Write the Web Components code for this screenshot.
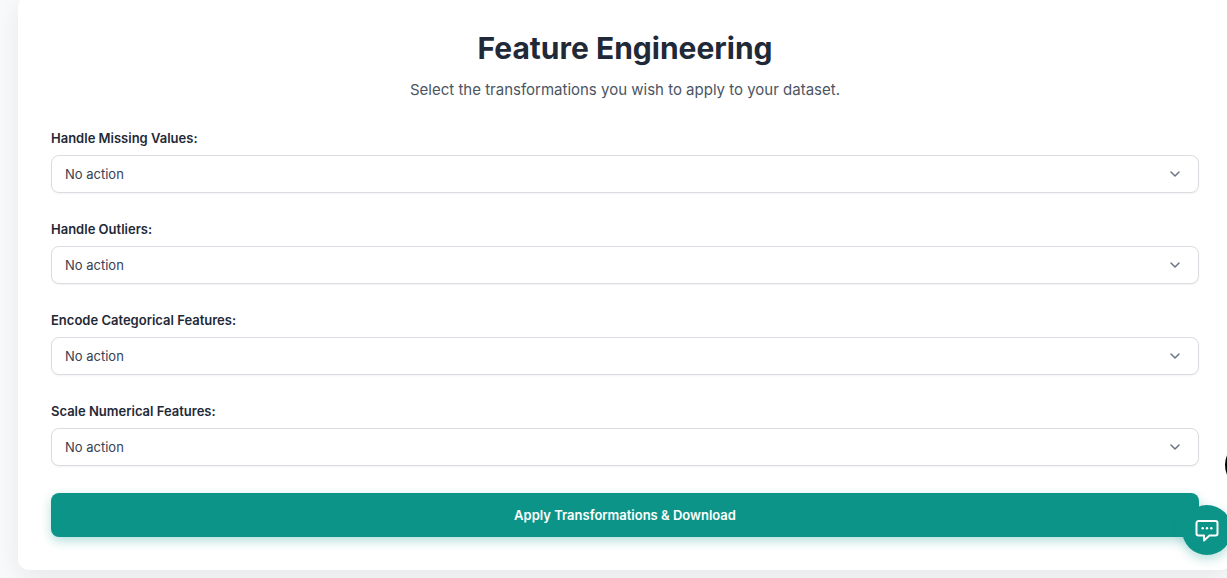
<!DOCTYPE html>
<html lang="en">
<head>
<meta charset="utf-8">
<meta name="viewport" content="width=device-width, initial-scale=1">
<title>Feature Engineering</title>
<style>
html { background: #f9fafb; }
body { margin: 0; min-height: 100vh; font-family: Inter, "Liberation Sans", sans-serif; color: #1f2937; overflow: hidden; }
</style>
</head>
<body>
<feature-page></feature-page>

<script>
class FeaturePage extends HTMLElement {
  constructor() {
    super();
    this.attachShadow({ mode: "open" }).innerHTML = `
      <style>
        :host { display: block; padding-left: 18px; margin-right: -5px; }
      </style>
      <form-card>
        <page-heading>
          <span slot="title">Feature Engineering</span>
          <span slot="hint">Select the transformations you wish to apply to your dataset.</span>
        </page-heading>
        <select-field label="Handle Missing Values:"></select-field>
        <select-field label="Handle Outliers:"></select-field>
        <select-field label="Encode Categorical Features:"></select-field>
        <select-field label="Scale Numerical Features:"></select-field>
        <submit-button>Apply Transformations &amp; Download</submit-button>
      </form-card>
      <side-handle></side-handle>
      <chat-launcher></chat-launcher>`;
  }
}

class FormCard extends HTMLElement {
  constructor() {
    super();
    this.attachShadow({ mode: "open" }).innerHTML = `
      <style>
        :host { display: block; }
        form {
          display: flex; flex-direction: column; gap: 27px;
          margin: 0; margin-top: -4px; padding: 33px; background: #fff; border-radius: 11px;
          box-shadow: 0 8px 28px rgba(0, 0, 0, .08);
        }
      </style>
      <form><slot></slot></form>`;
  }
}

class PageHeading extends HTMLElement {
  constructor() {
    super();
    this.attachShadow({ mode: "open" }).innerHTML = `
      <style>
        :host { display: block; text-align: center; }
        h1 { margin: 0 0 11px; font-size: 30px; line-height: 38px; font-weight: 700; color: #1f2937; }
        p { margin: 0; font-size: 15px; line-height: 24px; color: #4b5563; }
      </style>
      <h1><slot name="title"></slot></h1>
      <p><slot name="hint"></slot></p>`;
  }
}

class SelectField extends HTMLElement {
  constructor() {
    super();
    this.attachShadow({ mode: "open" }).innerHTML = `
      <style>
        :host { display: flex; flex-direction: column; gap: 8px; }
        label { font-size: 13px; line-height: 18px; font-weight: 600; color: #1f2937; }
        .box { display: grid; align-items: center; }
        select, svg { grid-area: 1 / 1; }
        select {
          appearance: none; box-sizing: border-box; width: 100%; height: 38px; margin: 0;
          padding: 0 40px 0 13px; border: 1px solid #d9dce1; border-radius: 8px;
          background: #fff; color: #374151; font: 400 13px/20px Inter, "Liberation Sans", sans-serif;
          box-shadow: 0 1px 2px rgba(0, 0, 0, .05);
        }
        svg { justify-self: end; margin-right: 17px; pointer-events: none; }
      </style>
      <label for="choice"></label>
      <div class="box">
        <select id="choice"><option>No action</option></select>
        <svg width="14" height="14" viewBox="0 0 14 14" fill="none" stroke="#6b7280" stroke-width="1.500" stroke-linecap="round" stroke-linejoin="round" aria-hidden="true"><path d="M3 5l4 4 4-4"/></svg>
      </div>`;
    this.shadowRoot.querySelector("label").textContent = this.getAttribute("label");
  }
}

class SubmitButton extends HTMLElement {
  constructor() {
    super();
    this.attachShadow({ mode: "open" }).innerHTML = `
      <style>
        :host { display: block; }
        button {
          display: block; width: 100%; height: 44px; padding: 0 24px; border: 0; border-radius: 8px;
          background: #0d9488; color: #fff; font: 600 13px/20px Inter, "Liberation Sans", sans-serif;
          box-shadow: 0 4px 11px rgba(13, 148, 136, .3);
        }
      </style>
      <button type="button"><slot></slot></button>`;
  }
}

class SideHandle extends HTMLElement {
  constructor() {
    super();
    this.attachShadow({ mode: "open" }).innerHTML = `
      <style>
        :host {
          position: fixed; right: -46px; bottom: 89px; width: 48px; height: 48px;
          border-radius: 50%; background: #000;
        }
      </style>`;
  }
}

class ChatLauncher extends HTMLElement {
  constructor() {
    super();
    this.attachShadow({ mode: "open" }).innerHTML = `
      <style>
        :host { position: fixed; right: -5px; bottom: 23px; }
        button {
          display: grid; place-items: center; width: 50px; height: 50px; padding: 0; border: 0;
          border-radius: 50%; background: #0d9488; color: #fff;
          box-shadow: 0 4px 11px rgba(13, 148, 136, .3);
        }
      </style>
      <button type="button" aria-label="Open chat">
        <svg width="24" height="24" viewBox="0 0 24 24" fill="none" stroke="currentColor" stroke-width="2" stroke-linejoin="round" aria-hidden="true">
          <path d="M3.500 3h17a2 2 0 0 1 2 2v10.500a2 2 0 0 1-2 2h-6L9 22.500v-5H3.500a2 2 0 0 1-2-2V5a2 2 0 0 1 2-2z"/>
          <g fill="currentColor" stroke="none"><circle cx="7.700" cy="10.300" r="1.200"/><circle cx="12" cy="10.300" r="1.200"/><circle cx="16.300" cy="10.300" r="1.200"/></g>
        </svg>
      </button>`;
  }
}

customElements.define("page-heading", PageHeading);
customElements.define("select-field", SelectField);
customElements.define("submit-button", SubmitButton);
customElements.define("form-card", FormCard);
customElements.define("side-handle", SideHandle);
customElements.define("chat-launcher", ChatLauncher);
customElements.define("feature-page", FeaturePage);
</script>
</body>
</html>
